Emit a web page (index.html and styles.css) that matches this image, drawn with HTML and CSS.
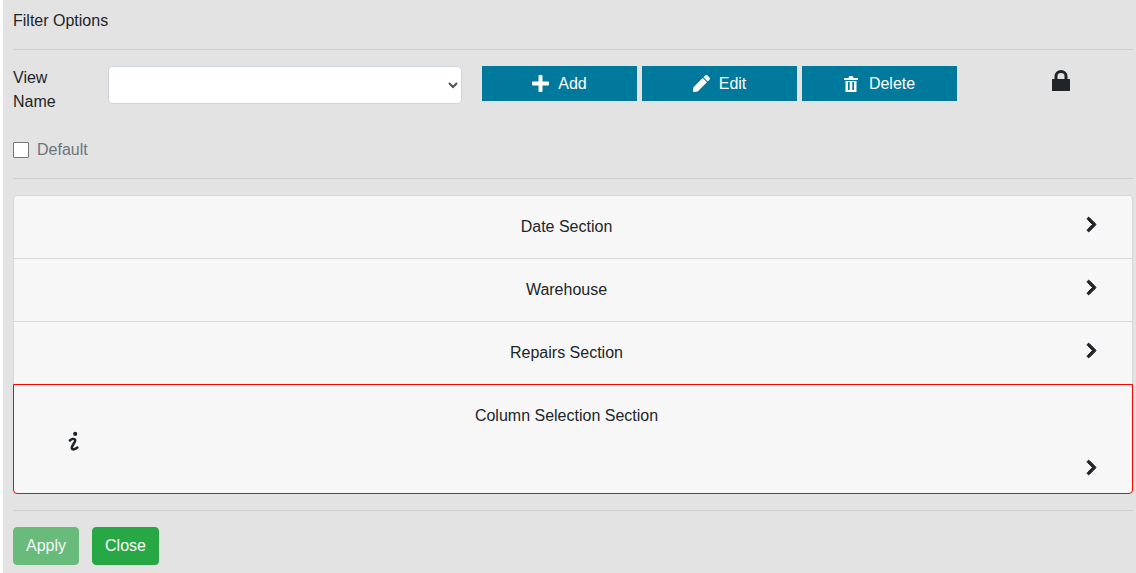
FILE: index.html
```html
<!DOCTYPE html>
<html lang="en">
<head>
<meta charset="utf-8">
<title>Filter Options</title>
<link rel="stylesheet" href="styles.css">
</head>
<body>
<main class="panel">
  <header class="panel-title">Filter Options</header>
  <hr class="rule rule-top">
  <section class="view-row">
    <label class="view-label" for="view">View Name</label>
    <select class="view-select" id="view"><option></option></select>
    <div class="actions">
      <button class="action" type="button">
        <svg class="icon icon-plus" viewBox="0 0 17 17"><path fill="currentColor" d="M6.500 1a1 1 0 0 1 1-1h2a1 1 0 0 1 1 1v5.500H16a1 1 0 0 1 1 1v2a1 1 0 0 1-1 1h-5.500V16a1 1 0 0 1-1 1h-2a1 1 0 0 1-1-1v-5.500H1a1 1 0 0 1-1-1v-2a1 1 0 0 1 1-1h5.500z"/></svg>
        <span>Add</span>
      </button>
      <button class="action" type="button">
        <svg class="icon icon-pencil" viewBox="0 0 512 512"><path fill="currentColor" d="M290.740 93.240l128.020 128.020-277.990 277.990-114.140 12.600C11.350 513.540-1.560 500.620.14 485.340l12.700-114.220 277.900-277.880zm207.200-19.060l-60.110-60.110c-18.750-18.750-49.160-18.750-67.910 0l-56.550 56.550 128.020 128.020 56.550-56.550c18.750-18.760 18.750-49.160 0-67.910z"/></svg>
        <span>Edit</span>
      </button>
      <button class="action action-delete" type="button">
        <svg class="icon icon-trash" viewBox="0 0 14 16"><path fill="currentColor" fill-rule="evenodd" d="M4.500 2l.6-1.400A1 1 0 0 1 6 0h2a1 1 0 0 1 .9.600L9.500 2H13.500a.5.500 0 0 1 .5.500v1a.5.500 0 0 1-.5.500H.5a.5.500 0 0 1-.5-.500v-1A.5.500 0 0 1 .5 2zM1.500 5h11v11h-11zM4 6v8h1.700V6zM8.300 6v8H10V6z"/></svg>
        <span>Delete</span>
      </button>
    </div>
    <svg class="lock" viewBox="0 0 18 21"><rect fill="currentColor" x="0" y="9" width="18" height="12" rx=".5"/><path fill="none" stroke="currentColor" stroke-width="3" d="M4 10V6a5 4.500 0 0 1 10 0V10"/></svg>
  </section>
  <label class="default-row"><input class="default-check" type="checkbox"><span>Default</span></label>
  <hr class="rule rule-mid">
  <section class="accordion">
    <div class="acc-row">
      <span class="acc-title">Date Section</span>
      <svg class="chevron" viewBox="0 0 320 512"><path fill="currentColor" stroke="currentColor" stroke-width="30" d="M285.476 272.971L91.132 467.314c-9.373 9.373-24.569 9.373-33.941 0l-22.667-22.667c-9.357-9.357-9.375-24.522-.04-33.901L188.505 256 34.484 101.255c-9.335-9.379-9.317-24.544.04-33.901l22.667-22.667c9.373-9.373 24.569-9.373 33.941 0L285.475 239.030c9.373 9.372 9.373 24.568.001 33.941z"/></svg>
    </div>
    <div class="acc-row">
      <span class="acc-title">Warehouse</span>
      <svg class="chevron" viewBox="0 0 320 512"><path fill="currentColor" stroke="currentColor" stroke-width="30" d="M285.476 272.971L91.132 467.314c-9.373 9.373-24.569 9.373-33.941 0l-22.667-22.667c-9.357-9.357-9.375-24.522-.04-33.901L188.505 256 34.484 101.255c-9.335-9.379-9.317-24.544.04-33.901l22.667-22.667c9.373-9.373 24.569-9.373 33.941 0L285.475 239.030c9.373 9.372 9.373 24.568.001 33.941z"/></svg>
    </div>
    <div class="acc-row">
      <span class="acc-title">Repairs Section</span>
      <svg class="chevron" viewBox="0 0 320 512"><path fill="currentColor" stroke="currentColor" stroke-width="30" d="M285.476 272.971L91.132 467.314c-9.373 9.373-24.569 9.373-33.941 0l-22.667-22.667c-9.357-9.357-9.375-24.522-.04-33.901L188.505 256 34.484 101.255c-9.335-9.379-9.317-24.544.04-33.901l22.667-22.667c9.373-9.373 24.569-9.373 33.941 0L285.475 239.030c9.373 9.372 9.373 24.568.001 33.941z"/></svg>
    </div>
    <div class="acc-row acc-alert">
      <svg class="info" viewBox="0 0 12 24"><circle fill="currentColor" cx="7.300" cy="3.200" r="2.300"/><path fill="none" stroke="currentColor" stroke-width="2.800" stroke-linecap="round" stroke-linejoin="round" d="M1.500 10.300C3.200 8.800 5.800 8 7 9.300c1 1.100-.2 2.700-1.400 4.600-1.200 1.900-2.500 3.700-1.900 5.200.7 1.600 3.500 1 6-1"/></svg>
      <span class="acc-title">Column Selection Section</span>
      <svg class="chevron" viewBox="0 0 320 512"><path fill="currentColor" stroke="currentColor" stroke-width="30" d="M285.476 272.971L91.132 467.314c-9.373 9.373-24.569 9.373-33.941 0l-22.667-22.667c-9.357-9.357-9.375-24.522-.04-33.901L188.505 256 34.484 101.255c-9.335-9.379-9.317-24.544.04-33.901l22.667-22.667c9.373-9.373 24.569-9.373 33.941 0L285.475 239.030c9.373 9.372 9.373 24.568.001 33.941z"/></svg>
    </div>
  </section>
  <hr class="rule rule-bottom">
  <footer class="footer">
    <button class="btn btn-apply" type="button">Apply</button>
    <button class="btn btn-close" type="button">Close</button>
  </footer>
</main>
</body>
</html>
```
FILE: styles.css
```css
* { box-sizing: border-box; }
html, body { height: 100%; }
body {
  margin: 0;
  padding-left: 3px;
  background: #fff;
  color: #212529;
  font: 16px/24px "Liberation Sans", Arial, sans-serif;
  overflow: hidden;
}
.panel {
  height: 573px;
  background: #e3e3e3;
  padding: 9px 0 0 10px;
  display: flex;
  flex-direction: column;
}
.panel-title { height: 24px; }
.rule {
  width: 1120px;
  height: 1px;
  margin: 0;
  border: 0;
  background: #cfcfcf;
  flex: none;
}
.rule-top { margin-top: 16px; }
.view-row {
  display: flex;
  align-items: flex-start;
  margin-top: 16px;
  height: 52px;
}
.view-label { width: 95px; flex: none; padding-right: 40px; }
.view-select {
  width: 354px;
  height: 38px;
  flex: none;
  background-color: #fff;
  border: 1px solid #ced4da;
  border-radius: 4px;
  font: inherit;
  color: #495057;
  padding: 6px 12px;
}
.actions { display: flex; gap: 5px; margin-left: 20px; flex: none; }
.action {
  width: 155px;
  height: 35px;
  border: 0;
  padding: 0;
  background: #00799c;
  color: #fff;
  font: inherit;
  display: flex;
  align-items: center;
  justify-content: center;
  gap: 9px;
}
.action-delete { gap: 11px; }
.icon { height: 16px; width: 16px; display: block; }
.icon-plus { width: 17px; height: 17px; }
.icon-pencil { width: 17px; height: 17px; }
.icon-trash { width: 14px; height: 16px; }
.lock { height: 21px; width: 18px; margin: 4px 0 0 95px; flex: none; display: block; color: #212529; }
.default-row {
  display: flex;
  align-items: center;
  gap: 8px;
  margin-top: 20px;
  height: 24px;
  color: #6c757d;
}
.default-check {
  appearance: none;
  width: 16px;
  height: 16px;
  margin: 0;
  background: #fff;
  border: 1px solid #767676;
  border-radius: 1px;
}
.rule-mid { margin-top: 16px; }
.accordion { width: 1120px; margin-top: 16px; flex: none; }
.acc-row {
  position: relative;
  height: 63px;
  background: #f7f7f7;
  border: 1px solid rgba(0,0,0,.125);
  border-top-width: 0;
  padding-top: 19px;
  text-align: center;
}
.acc-row:first-child { height: 64px; border-top-width: 1px; border-radius: 4px 4px 0 0; }
.acc-title { display: block; width: 1105px; }
.acc-alert {
  height: 110px;
  margin-top: -1px;
  border: 1px solid #f00;
  border-radius: 0 0 4px 4px;
  padding-top: 19px;
}
.chevron { position: absolute; left: 1072px; top: 20px; width: 11px; height: 17px; color: #212529; }
.acc-alert .chevron { top: 74px; }
.info { position: absolute; left: 54px; top: 46px; width: 12px; height: 22px; color: #212529; }
.rule-bottom { margin-top: 16px; }
.footer { display: flex; gap: 13px; margin-top: 16px; }
.btn {
  height: 38px;
  border: 1px solid #28a745;
  border-radius: 4px;
  background: #28a745;
  color: #fff;
  font: inherit;
  padding: 6px 12px;
}
.btn-apply { opacity: .65; }
```
